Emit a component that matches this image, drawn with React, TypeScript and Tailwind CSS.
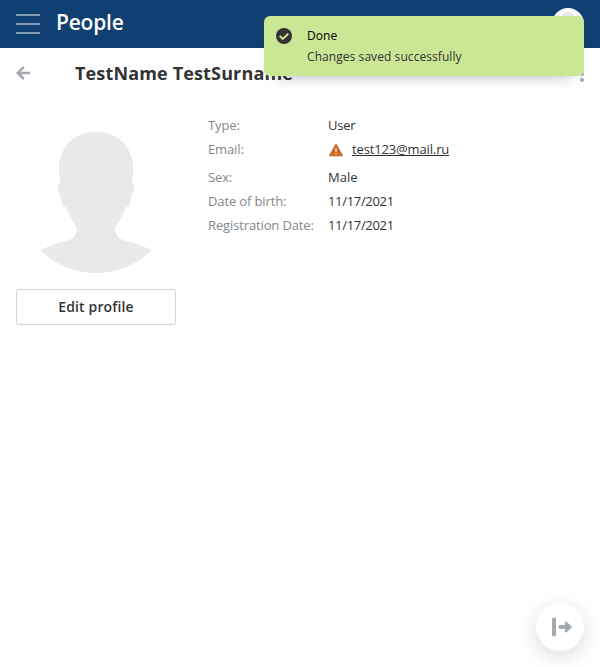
import type { ReactNode } from "react";

function Row({ label, children, tall }: { label: string; children: ReactNode; tall?: boolean }) {
  return (
    <div className={tall ? "flex h-7 items-start" : "flex h-6 items-start"}>
      <dt className="w-[120px] whitespace-nowrap leading-6 tracking-[-0.13px] text-[#83888d]">{label}</dt>
      <dd className="flex h-6 items-center whitespace-nowrap leading-6 text-[#333333]">{children}</dd>
    </div>
  );
}

function Silhouette() {
  return (
    <svg viewBox="48 33 480 480" className="size-40" fill="#e9e9e9">
      <path d="M288 66C222 66 178 110 177 176Q177 200 182 219C174 220 173 230 174 238C176 249 184 262 186 274C187 285 188 293 198 291C205 311 221 337 230 352C232 370 222 387 204 391C176 397 146 408 121 421C168 466 225 489 288 489C351 489 408 466 455 421C430 408 400 397 372 391C354 387 344 370 346 352C357 337 371 311 378 291C388 293 389 285 390 274C392 262 400 249 402 238C403 230 403 220 395 219Q400 200 400 176C399 110 354 66 288 66Z" />
    </svg>
  );
}

function Toast() {
  return (
    <div className="absolute top-4 right-4 flex h-[60px] w-[320px] rounded-md bg-[#cae796] pt-3 pl-3 shadow-[0_10px_16px_-12px_rgba(4,15,27,0.4)]">
      <svg viewBox="0 0 16 16" className="size-4" fill="none">
        <circle cx="8" cy="8" r="8" fill="#333333" />
        <path d="M3.8 8l3 3 5.4-5.3" stroke="#cae796" strokeWidth="1.9" />
      </svg>
      <div className="ml-[15px] text-xs tracking-[0.07px] text-[#333333]">
        <p className="-mt-px leading-[18px] text-black">Done</p>
        <p className="mt-[3px] leading-[18px]">Changes saved successfully</p>
      </div>
    </div>
  );
}

export default function App() {
  return (
    <div className="relative h-[667px] w-[600px] overflow-hidden bg-white font-['Open_Sans',sans-serif] text-[13px]">
      <header className="flex h-12 items-center bg-[#0f4071] pl-4">
        <svg viewBox="0 0 24 20" className="h-5 w-6" fill="#7f9bb5">
          <path d="M0 0h24v2H0zM0 9h24v2H0zM0 18h24v2H0z" />
        </svg>
        <h1 className="ml-4 -mt-1 text-[21px] leading-7 font-semibold tracking-[-0.2px] text-white">People</h1>
        <svg viewBox="0 0 32 32" className="mr-4 ml-auto size-8">
          <circle cx="16" cy="16" r="16" fill="white" />
          <path d="M16 4c-5 0-7 3-7 7s3 9 4 10l-6 3c6 5 12 5 18 0l-6-3c2-2 4-6 4-10s-2-7-7-7Z" fill="#e9e9e9" />
        </svg>
      </header>
      <div className="flex h-[50px] items-center pl-4">
        <svg viewBox="0 0 14 14" className="size-3.5" fill="none" stroke="#a3a9ae" strokeWidth="2.5">
          <path d="M14 7H2M7.8 1L1.8 7l6 6" />
        </svg>
        <h2 className="ml-[45px] text-[18px] leading-6 font-bold tracking-[0.15px] text-[#333333]">TestName TestSurname</h2>
        <svg viewBox="0 0 4 16" className="mt-[2px] mr-4 ml-auto h-4 w-1" fill="#a3a9ae">
          <circle cx="2" cy="2" r="2" />
          <circle cx="2" cy="8" r="2" />
          <circle cx="2" cy="14" r="2" />
        </svg>
      </div>
      <main className="flex gap-8 px-4 pt-[15px]">
        <section className="flex w-40 flex-col pt-2">
          <Silhouette />
          <button className="mt-2 h-9 rounded-[3px] border border-[#d0d5da] text-sm font-semibold tracking-[0.15px] text-[#333333]">Edit profile</button>
        </section>
        <dl>
          <Row label="Type:"><span className="tracking-[-0.2px]">User</span></Row>
          <Row label="Email:" tall>
            <svg viewBox="0 0 16 14" className="mt-0.5 h-3.5 w-4">
              <path d="M8 1.5L14.2 12.5H1.8Z" fill="#c96c27" stroke="#c96c27" strokeWidth="1.5" strokeLinejoin="round" />
              <path d="M7.3 5h1.4v4H7.3zM7.3 10h1.4v1.3H7.3z" fill="#f5e5da" />
            </svg>
            <a className="ml-2 tracking-[-0.14px] underline" href="#">test123@mail.ru</a>
          </Row>
          <Row label="Sex:">Male</Row>
          <Row label="Date of birth:"><span className="tracking-[-0.32px]">11/17/2021</span></Row>
          <Row label="Registration Date:"><span className="tracking-[-0.32px]">11/17/2021</span></Row>
        </dl>
      </main>
      <Toast />
      <button aria-label="Open menu" className="absolute right-4 bottom-4 flex size-12 items-center justify-center rounded-full bg-white shadow-[0_5px_20px_rgba(4,15,27,0.14)]">
        <svg viewBox="0 0 20 20" className="ml-1 size-5" fill="#a3a9ae">
          <rect x="0" y="0.5" width="4" height="19" rx="1.7" />
          <path d="M8 8h5V5.5c0-1.2 1-1.3 1.8-.5l4.4 4q1 1 0 2l-4.4 4c-.8.8-1.8.7-1.8-.5V12H8q-1.5 0-1.5-2T8 8Z" />
        </svg>
      </button>
    </div>
  );
}
